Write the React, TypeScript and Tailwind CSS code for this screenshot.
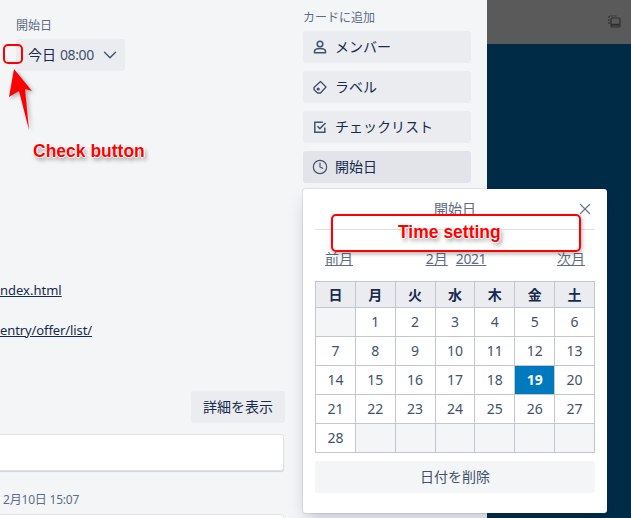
import { Clock, X, ChevronDown } from "lucide-react";

const font = "font-['Noto_Sans','Noto_Sans_CJK_JP',sans-serif]";
const weeks: (number | null)[][] = [
  [null, 1, 2, 3, 4, 5, 6],
  [7, 8, 9, 10, 11, 12, 13],
  [14, 15, 16, 17, 18, 19, 20],
  [21, 22, 23, 24, 25, 26, 27],
  [28, null, null, null, null, null, null],
];
const days = ["日", "月", "火", "水", "木", "金", "土"];
const annotation =
  "absolute font-['Liberation_Sans',sans-serif] font-bold text-[17.5px] leading-[20px] text-[#ff0000] whitespace-nowrap [text-shadow:-1px_0_0_#fff,1px_0_0_#fff,0_-1px_0_#fff,0_1px_0_#fff,2px_3px_4px_rgba(0,0,0,0.45)]";

function UserIcon() {
  return (
    <svg width="14" height="14" viewBox="0 0 14 14" fill="none" stroke="currentColor" strokeWidth="1.5">
      <circle cx="7" cy="4" r="2.8" />
      <path d="M1.5 12.8v-1.3c0-2 2-3 5.5-3s5.5 1 5.5 3v1.3z" strokeLinejoin="round" />
    </svg>
  );
}

function LabelIcon() {
  return (
    <svg width="14" height="14" viewBox="0 0 14 14" fill="none" stroke="currentColor" strokeWidth="1.4">
      <path d="M1 7.5 7.5 1.5 13 7l-5.5 6H4.5L1 9.5z" strokeLinejoin="round" />
      <circle cx="5.2" cy="9" r="1.6" fill="currentColor" stroke="none" />
    </svg>
  );
}

function CheckIcon() {
  return (
    <svg width="14" height="14" viewBox="0 0 14 14" fill="none" stroke="currentColor" strokeWidth="1.5">
      <path d="M11.8 7.5v4.7H1.8V2.2h8" />
      <path d="m4.5 6.2 2.4 2.4 5.6-5.6" />
    </svg>
  );
}

function SideButton({ icon, label, active }: { icon: React.ReactNode; label: string; active?: boolean }) {
  return (
    <div className={`flex h-8 w-[168px] items-center gap-[7px] rounded-[3px] pl-[9px] text-sm text-[#172b4d] ${active ? "bg-[#e2e4ea]" : "bg-[#eaecf0]"}`}>
      <span className="flex w-4 justify-center text-[#42526e]">{icon}</span>
      {label}
    </div>
  );
}

export default function App() {
  return (
    <div className={`relative flex h-[518px] w-[631px] overflow-hidden bg-[#002b46] text-[#172b4d] ${font}`}>
      <div className="flex h-full w-[487px] shrink-0 bg-[#f4f5f7]">
        <div className="w-[303px] shrink-0 overflow-hidden">
          <div className="pl-4 pt-[17px] text-xs leading-[18px] text-[#5e6c84]">開始日</div>
          <div className="ml-4 mt-[4px] flex h-8 w-[109px] items-center rounded-[3px] bg-[#eaecf0] pl-3 text-sm text-[#172b4d]">
            今日 <span className="ml-1 tracking-[-0.4px] text-[#42526e]">08:00</span>
            <ChevronDown className="ml-[5px] text-[#42526e]" size={22} strokeWidth={1.5} />
          </div>
          <div className="mt-[209px] whitespace-nowrap text-[13px] leading-[20px] text-[#172b4d] underline">ndex.html</div>
          <div className="mt-5 whitespace-nowrap text-[13px] leading-[20px] tracking-[-0.1px] text-[#172b4d] underline">entry/offer/list/</div>
          <div className="ml-[191px] mt-[51px] flex h-8 w-[94px] items-center justify-center rounded-[3px] bg-[#eaecf0] text-sm">詳細を表示</div>
          <div className="-ml-2 mt-[11px] h-[37px] w-[292px] rounded-[3px] border border-[#dfe1e6] bg-white shadow-[0_1px_1px_rgba(9,30,66,0.15)]" />
          <div className="ml-[3px] mt-[20px] text-xs leading-[18px] tracking-[-0.2px] text-[#5e6c84]">2月10日 15:07</div>
          <div className="-ml-2 mt-[5px] h-10 w-[292px] rounded-[3px] border border-[#dfe1e6] bg-white" />
        </div>
        <div className="flex flex-col gap-2 pt-[9px]">
          <div className="-mb-[4px] text-xs leading-[18px] text-[#5e6c84]">カードに追加</div>
          <SideButton icon={<UserIcon />} label="メンバー" />
          <SideButton icon={<LabelIcon />} label="ラベル" />
          <SideButton icon={<CheckIcon />} label="チェックリスト" />
          <SideButton icon={<Clock size={16} strokeWidth={1.75} />} label="開始日" active />
        </div>
      </div>
      <div className="flex h-11 flex-1 items-start justify-end bg-[#5a5a5a] pr-[10px] pt-[15px]">
        <svg width="13" height="13" viewBox="0 0 13 13" fill="none" stroke="#2f2f2f" strokeWidth="1.2">
          <path d="M1 9V2a1 1 0 0 1 1-1h7" strokeDasharray="2 1" />
          <rect x="3" y="3" width="9" height="9" rx="1" />
          <path d="M3.5 9.8h8" strokeWidth="2" />
        </svg>
      </div>

      {/* date popover */}
      <div className="absolute left-[303px] top-[189px] h-[324px] w-[304px] rounded-[3px] bg-white px-3 shadow-[0_8px_16px_-4px_rgba(9,30,66,0.25),0_0_0_1px_rgba(9,30,66,0.08)]">
        <div className="relative flex h-[41px] items-center justify-center border-b border-[#dfe1e6] text-sm text-[#5e6c84]">
          開始日
          <X className="absolute right-[1px] top-[11px] text-[#6b778c]" size={18} strokeWidth={1.75} />
        </div>
        <div className="flex h-[51px] items-center justify-between px-[10px] pt-[7px] text-sm text-[#5e6c84] underline">
          <span>前月</span>
          <span className="ml-[2px] flex gap-2"><span>2月</span><span className="tracking-[-0.4px]">2021</span></span>
          <span>次月</span>
        </div>
        <table className="w-[280px] table-fixed border-collapse text-sm">
          <thead>
            <tr className="h-[26px]">
              {days.map((d) => (
                <th key={d} className="border border-[#c1c7d0] bg-[#ebecf0] p-0 font-semibold text-[#172b4d]">{d}</th>
              ))}
            </tr>
          </thead>
          <tbody>
            {weeks.map((w, i) => (
              <tr key={i} className="h-[29px]">
                {w.map((n, j) =>
                  n === null ? (
                    <td key={j} className="border border-[#c1c7d0] bg-[#f4f5f7] p-0" />
                  ) : (
                    <td
                      key={j}
                      className={`border border-[#c1c7d0] p-0 text-center ${n === 19 ? "bg-[#0079bf] font-bold text-white" : "text-[#42526e]"}`}
                    >
                      {n}
                    </td>
                  ),
                )}
              </tr>
            ))}
          </tbody>
        </table>
        <div className="mt-[8px] flex h-8 items-center justify-center rounded-[3px] bg-[#f4f5f7] text-sm text-[#42526e]">日付を削除</div>
      </div>

      {/* red annotations pasted over the screenshot */}
      <div className="absolute left-[3px] top-[44px] h-5 w-5 rounded-[5px] border-2 border-[#ff0000]" />
      <svg className="absolute left-0 top-[60px] drop-shadow-[2px_2px_2px_rgba(0,0,0,0.3)]" width="40" height="76" viewBox="0 60 40 76">
        <polygon points="14,69 32,91 25,89 29,130 19,91 9,97" fill="#ff0000" />
      </svg>
      <div className={`${annotation} left-[33px] top-[141px]`}>Check button</div>
      <div className="absolute left-[331px] top-[214px] h-[38px] w-[250px] rounded-[5px] border-2 border-[#ff0000] shadow-[1px_2px_4px_rgba(0,0,0,0.3)]" />
      <div className={`${annotation} left-[398px] top-[222px]`}>Time setting</div>
    </div>
  );
}
